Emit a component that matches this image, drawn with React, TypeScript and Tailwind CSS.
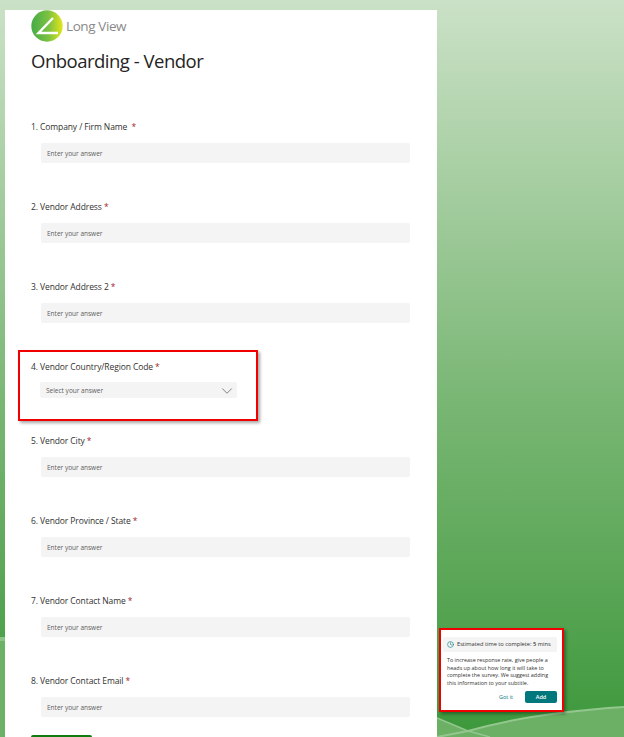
import { ChevronDown, Clock } from "lucide-react";

const questions = [
  { label: "1. Company / Firm Name", gap: true },
  { label: "2. Vendor Address" },
  { label: "3. Vendor Address 2" },
  { label: "4. Vendor Country/Region Code", select: true },
  { label: "5. Vendor City" },
  { label: "6. Vendor Province / State" },
  { label: "7. Vendor Contact Name" },
  { label: "8. Vendor Contact Email" },
];

const Logo = () => (
  <svg width="32" height="32" viewBox="0 0 32 32">
    <defs>
      <linearGradient id="logo-fill" x1="0" y1="0" x2="1" y2="0">
        <stop offset="0" stopColor="#46ab48" />
        <stop offset="0.55" stopColor="#7cc242" />
        <stop offset="1" stopColor="#e4e619" />
      </linearGradient>
    </defs>
    <circle cx="16" cy="16" r="15.7" fill="url(#logo-fill)" />
    <path d="M22 8 L7.5 23 L27 23" fill="none" stroke="#fff" strokeWidth="2.4" />
  </svg>
);

// background swoosh, mostly hidden behind the card
const Swoosh = () => (
  <svg className="absolute bottom-0 left-0" width="624" height="100" viewBox="0 0 624 100">
    <rect x="0" y="0" width="30" height="100" fill="#6bb166" />
    <rect x="0" y="0" width="30" height="4" fill="#8cc488" />
    <path d="M437 81 L468 94 C510 82 560 74 624 70 L624 100 L437 100 Z" fill="#6bb065" />
    <path d="M437 100 L468 94 C510 82 560 74 624 70" fill="none" stroke="#93c78e" strokeWidth="2" />
    <path d="M437 81 L468 94 L490 100" fill="none" stroke="#93c78e" strokeWidth="1.5" />
  </svg>
);

export default function App() {
  return (
    <div className="relative h-[737px] w-[624px] overflow-hidden bg-gradient-to-b from-[#cbe1c7] via-[#78b673] via-55% to-[#3c983b] font-['Open_Sans',sans-serif] text-[#323130]">
      <Swoosh />

      <main className="relative ml-[5px] mt-[10px] h-[760px] w-[432px] bg-white pl-[26px] pr-[27px]">
        <div className="flex h-[32px] items-center gap-[3px]">
          <Logo />
          <span className="text-[13.5px] tracking-[-0.4px] text-[#8a8a8a]">Long View</span>
        </div>
        <h1 className="mt-[5px] text-[18.5px] leading-[28px] tracking-[-0.5px] text-[#252423]">Onboarding - Vendor</h1>

        <div className="mt-[45px]">
          {questions.map((q) => (
            <div key={q.label} className={q.select ? "mb-[36px]" : "mb-[37px]"}>
              <div className="text-[8.5px] leading-[14px] tracking-[-0.1px]">
                {q.label}
                {q.gap && <span>&nbsp;</span>} <span className="text-[#a4262c]">*</span>
              </div>
              {q.select ? (
                <div className="ml-[9px] mt-[8px] flex h-[16px] w-[197px] items-center justify-between rounded-[2px] bg-[#f4f4f4] pl-[6px] pr-[1px] pt-[1px] text-[6.5px] text-[#605e5c]">
                  Select your answer
                  <ChevronDown size={18} strokeWidth={0.8} className="shrink-0 text-[#333]" />
                </div>
              ) : (
                <div className="ml-[10px] mt-[9px] flex h-[20px] w-[369px] items-center rounded-[2px] bg-[#f4f4f4] pl-[6px] pt-[2px] text-[6.5px] text-[#605e5c]">
                  Enter your answer
                </div>
              )}
            </div>
          ))}
        </div>

        <div className="-mt-[19px] flex items-center gap-[11px]">
          <div className="h-[20px] w-[61px] rounded-[2px] bg-[#107c10]" />
          <div className="h-[12px] w-[12px] rounded-full bg-[#e6f2e0]" />
        </div>
      </main>

      <div className="absolute left-[18px] top-[350px] h-[71px] w-[240px] border-2 border-[#f00000] shadow-[2px_2px_3px_rgba(0,0,0,0.35)]" />

      <aside className="absolute left-[439px] top-[628px] h-[84px] w-[125px] border-2 border-[#f00000] bg-white pl-[2px] pr-[5px] pt-[7px] shadow-[2px_2px_3px_rgba(0,0,0,0.35)]">
        <div className="flex h-[15px] items-center gap-[3px] rounded-[2px] bg-[#f4f4f4] pl-[4px] text-[5.7px] text-[#323130]">
          <Clock size={7} className="text-[#03787c]" />
          <span>
            Estimated time to complete: <b className="font-semibold">5</b> mins
          </span>
        </div>
        <p className="ml-[4px] mt-[5px] text-[5.4px] leading-[7.5px] text-[#323130]">
          To increase response rate, give people a heads up about how long it will take to complete the survey. We suggest adding this information to your subtitle.
        </p>
        <div className="mt-[4px] flex items-center justify-end gap-[12px]">
          <span className="text-[5.5px] text-[#03787c]">Got it</span>
          <span className="flex h-[12px] w-[32px] items-center justify-center rounded-[2px] bg-[#03787c] text-[5.5px] font-semibold text-white">Add</span>
        </div>
      </aside>
    </div>
  );
}
